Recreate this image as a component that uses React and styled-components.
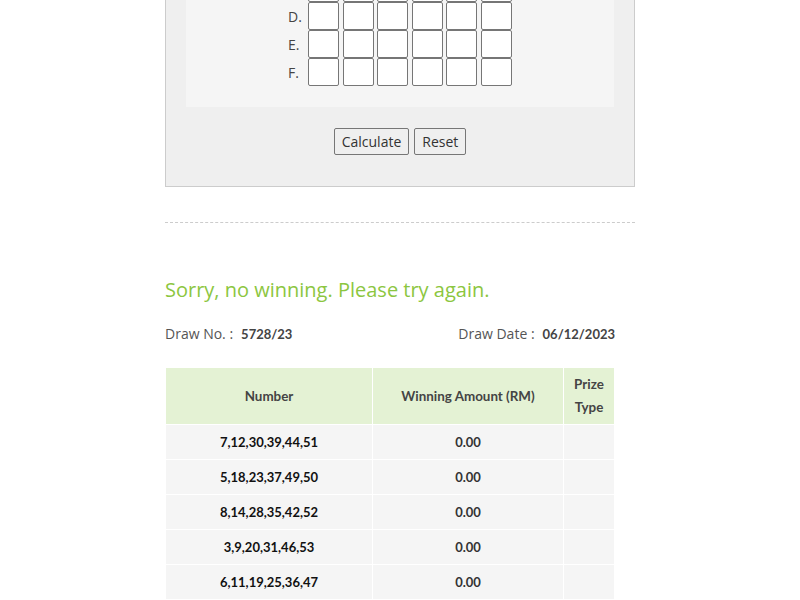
import React from 'react';
import styled, { createGlobalStyle } from 'styled-components';

const GlobalStyle = createGlobalStyle`
    html, body {
        margin: 0;
        padding: 0;
        background: #fff;
        overflow: hidden;
    }
    body {
        font-family: "Open Sans", "Liberation Sans", sans-serif;
        color: #555;
    }
`;

const Page = styled.div`
    width: 470px;
    margin: -83px auto 0;
`;

const FormPanel = styled.div`
    background: #efefef;
    border: 1px solid #ccc;
    padding: 0 20px 31px;
`;

const InnerPanel = styled.div`
    background: #f5f5f5;
    padding: 0 0 21px;
    display: flex;
    flex-direction: column;
    align-items: center;
`;

const LineRow = styled.div`
    display: flex;
    align-items: center;
    height: 28px;
`;

const LineLabel = styled.span`
    width: 20px;
    font-size: 14px;
    color: #444;
`;

const NumBox = styled.input`
    box-sizing: border-box;
    width: 31px;
    height: 28px;
    margin: 0 3.6px 0 0;
    padding: 0;
    border: 1px solid #767676;
    border-radius: 2px;
    background: #fff;
    &:last-child {
        margin-right: 0;
    }
`;

const ButtonBar = styled.div`
    display: flex;
    justify-content: center;
    gap: 5px;
    margin-top: 21px;
`;

const Button = styled.button`
    height: 27px;
    padding: 0 7px;
    font-family: "Open Sans", "Liberation Sans", sans-serif;
    font-size: 14px;
    color: #333;
    background: #efefef;
    border: 1px solid #767676;
    border-radius: 2px;
`;

const Divider = styled.hr`
    margin: 35px 0 0;
    border: 0;
    border-top: 1px dashed #ccc;
`;

const Result = styled.div`
    width: 450px;
    padding-top: 53px;
`;

const Message = styled.h2`
    margin: 0;
    font-size: 20px;
    font-weight: 400;
    line-height: 28px;
    color: #8cc63f;
`;

const DrawInfo = styled.div`
    display: flex;
    justify-content: space-between;
    margin-top: 20px;
    font-size: 14px;
    line-height: 19px;
    color: #555;
`;

const DrawValue = styled.span`
    font-family: Lato, "Liberation Sans", sans-serif;
    font-size: 13px;
    font-weight: 700;
    color: #444;
    margin-left: 8px;
`;

const ResultTable = styled.table`
    width: 450px;
    margin-top: 23px;
    border-collapse: collapse;
    font-family: Lato, "Liberation Sans", sans-serif;
`;

const HeadCell = styled.th`
    background: #e4f2d4;
    border: 1px solid #fff;
    height: 56px;
    padding: 0 8px;
    font-size: 13.4px;
    font-weight: 700;
    line-height: 23px;
    color: #444;
    width: ${(p) => p.width}px;
`;

const Cell = styled.td`
    background: #f5f5f5;
    border: 1px solid #fff;
    height: 34px;
    padding: 0;
    text-align: center;
    font-size: 13px;
    font-weight: 700;
    color: ${(p) => (p.muted ? '#333' : '#111')};
`;

const lines = ['A.', 'B.', 'C.', 'D.', 'E.', 'F.'];

const results = [
    '7,12,30,39,44,51',
    '5,18,23,37,49,50',
    '8,14,28,35,42,52',
    '3,9,20,31,46,53',
    '6,11,19,25,36,47'
];

const App = () => (
    <>
        <GlobalStyle />
        <Page>
            <FormPanel>
                <InnerPanel>
                    {lines.map((line) => (
                        <LineRow key={line}>
                            <LineLabel>{line}</LineLabel>
                            {[0, 1, 2, 3, 4, 5].map((i) => (
                                <NumBox key={i} type="text" />
                            ))}
                        </LineRow>
                    ))}
                </InnerPanel>
                <ButtonBar>
                    <Button>Calculate</Button>
                    <Button>Reset</Button>
                </ButtonBar>
            </FormPanel>
            <Divider />
            <Result>
                <Message>Sorry, no winning. Please try again.</Message>
                <DrawInfo>
                    <span>
                        Draw No. :<DrawValue>5728/23</DrawValue>
                    </span>
                    <span>
                        Draw Date :<DrawValue>06/12/2023</DrawValue>
                    </span>
                </DrawInfo>
                <ResultTable>
                    <thead>
                        <tr>
                            <HeadCell width={190}>Number</HeadCell>
                            <HeadCell width={174}>Winning Amount (RM)</HeadCell>
                            <HeadCell width={34}>Prize Type</HeadCell>
                        </tr>
                    </thead>
                    <tbody>
                        {results.map((nums) => (
                            <tr key={nums}>
                                <Cell>{nums}</Cell>
                                <Cell muted>0.00</Cell>
                                <Cell />
                            </tr>
                        ))}
                    </tbody>
                </ResultTable>
            </Result>
        </Page>
    </>
);

export default App;
